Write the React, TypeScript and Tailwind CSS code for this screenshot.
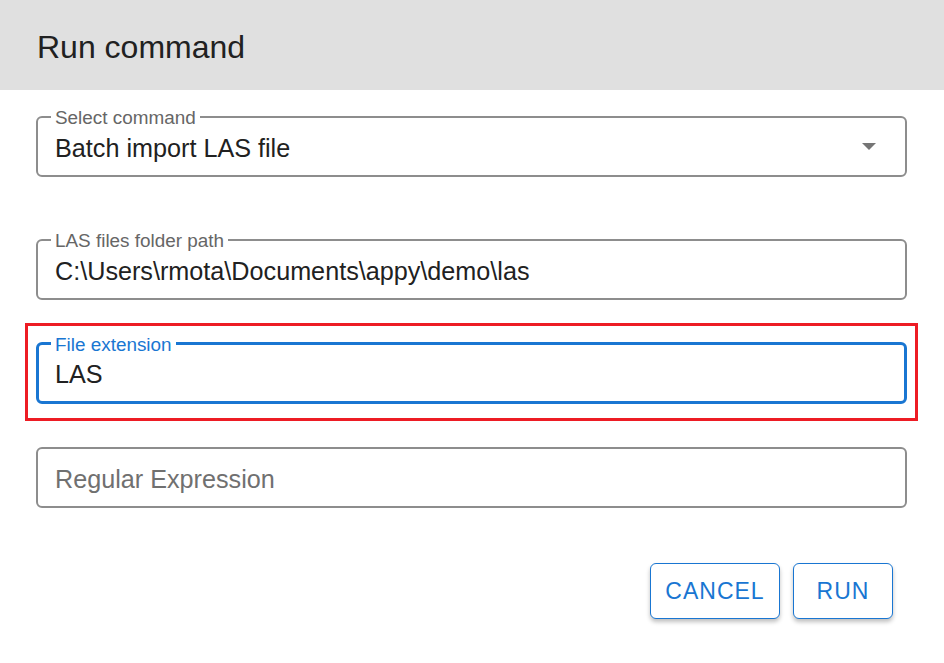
import React from "react";

function Field({
  label,
  value,
  placeholder,
  focused,
  select,
}: {
  label?: string;
  value?: string;
  placeholder?: string;
  focused?: boolean;
  select?: boolean;
}) {
  if (focused) {
    return (
      <div className="relative h-[62px] rounded-[6px] border-[3px] border-[#1976d2] flex items-center px-[16px]">
        {label && (
          <span className="absolute left-[12px] top-[-11px] px-[4px] bg-white text-[18.9px] leading-[22px] text-[#1976d2]">
            {label}
          </span>
        )}
        <span className="text-[25.2px] leading-[28px] text-[#212121] pt-[2px]">{value}</span>
      </div>
    );
  }
  return (
    <div className="relative h-[61px] rounded-[6px] border-2 border-[#8d8d8d] flex items-center px-[17px]">
      {label && (
        <span className="absolute left-[13px] top-[-11px] px-[4px] bg-white text-[18.9px] leading-[22px] text-[#666666]">
          {label}
        </span>
      )}
      {value ? (
        <span className="text-[25.2px] leading-[28px] text-[#212121] pt-[2px]">{value}</span>
      ) : (
        <span className="text-[25.2px] leading-[28px] text-[#707070] pt-[2px]">{placeholder}</span>
      )}
      {select && (
        <svg className="ml-auto mr-[12px]" width="14" height="7" viewBox="0 0 14 7">
          <polygon points="0,0 14,0 7,7" fill="#757575" />
        </svg>
      )}
    </div>
  );
}

export default function App() {
  return (
    <div className="w-[944px] h-[663px] bg-white font-['Liberation_Sans',Arial,sans-serif] flex flex-col overflow-hidden">
      <div className="h-[90px] bg-[#e0e0e0] pl-[37px] flex items-center shrink-0">
        <h1 className="text-[32px] leading-[36px] text-[#212121] pt-[4px]">Run command</h1>
      </div>
      <div className="pl-[36px] pr-[37px] pt-[26px] flex flex-col">
        <Field label="Select command" value="Batch import LAS file" select />
        <div className="mt-[62px]">
          <Field label="LAS files folder path" value="C:\Users\rmota\Documents\appy\demo\las" />
        </div>
        <div className="mt-[23px] mx-[-11px] border-[3px] border-[#ed1c24] px-[8px] pt-[16px] pb-[14px]">
          <Field label="File extension" value="LAS" focused />
        </div>
        <div className="mt-[26px]">
          <Field placeholder="Regular Expression" />
        </div>
        <div className="mt-[55px] flex justify-end gap-[13px] pr-[14px]">
          <button className="w-[130px] h-[56px] rounded-[6px] border border-[#1976d2] bg-white text-[#1976d2] text-[23px] tracking-[1px] shadow-[0_3px_4px_rgba(0,0,0,0.25)] flex items-center justify-center">
            CANCEL
          </button>
          <button className="w-[100px] h-[56px] rounded-[6px] border border-[#1976d2] bg-white text-[#1976d2] text-[23px] tracking-[1px] shadow-[0_3px_4px_rgba(0,0,0,0.25)] flex items-center justify-center">
            RUN
          </button>
        </div>
      </div>
    </div>
  );
}
